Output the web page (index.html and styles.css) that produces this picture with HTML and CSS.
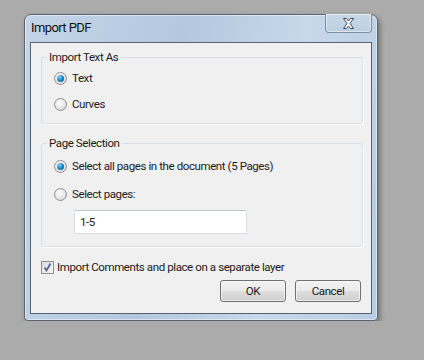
FILE: index.html
```html
<!DOCTYPE html>
<html lang="en">
  <head>
    <meta charset="UTF-8" />
    <title>Import PDF</title>
    <link rel="stylesheet" href="styles.css">
  </head>
  <body>
    <div class="window">
      <div class="titlebar">
        <span class="title">Import PDF</span>
        <button class="close" aria-label="Close">
          <svg width="13" height="11" viewBox="0 0 13 11">
            <path d="M1.5 0.5 H4.5 L6.5 3 L8.5 0.5 H11.5 L8 5.5 L11.5 10.5 H8.5 L6.5 8 L4.5 10.5 H1.5 L5 5.5 Z"
                  fill="#fff" stroke="#3c4658" stroke-width="1" stroke-linejoin="round" />
          </svg>
        </button>
      </div>
      <div class="client">
        <fieldset class="group">
          <legend>Import Text As</legend>
          <label class="row"><span class="radio checked"></span>Text</label>
          <label class="row"><span class="radio"></span>Curves</label>
        </fieldset>

        <fieldset class="group pages">
          <legend>Page Selection</legend>
          <label class="row tall"><span class="radio checked"></span>Select all pages in the document (5 Pages)</label>
          <label class="row"><span class="radio"></span>Select pages:</label>
          <input class="range" type="text" value="1-5" />
        </fieldset>

        <label class="check-row">
          <span class="checkbox">
            <svg width="11" height="11" viewBox="0 0 11 11">
              <path d="M2.5 5.5 L4.5 8.5 L8.5 1.5" fill="none" stroke="#4b5e9a" stroke-width="1.6" />
            </svg>
          </span>
          Import Comments and place on a separate layer
        </label>

        <div class="buttons">
          <button class="btn">OK</button>
          <button class="btn">Cancel</button>
        </div>
      </div>
    </div>
  </body>
</html>
```

FILE: styles.css
```css
body {
  margin: 0;
  padding: 14px 0 0 24px;
  background-color: #ababab;
  font-family: Roboto, "Open Sans", sans-serif;
  font-size: 11.5px;
  letter-spacing: -0.4px;
  color: #1b1b1b;
}
.window {
  width: 354px;
  height: 307px;
  box-sizing: border-box;
  border: 1px solid #5b6470;
  border-radius: 7px 7px 4px 4px;
  background: linear-gradient(100deg, #c3d5e8 0%, #b3c8de 40%, #c6d8ea 70%, #b9cde2 100%);
  box-shadow: 2px 3px 5px rgba(0, 0, 0, 0.35), inset 0 0 0 1px rgba(255, 255, 255, 0.5);
  padding: 0 5px 6px 5px;
}
.titlebar {
  height: 27px;
  display: flex;
  align-items: flex-start;
  justify-content: space-between;
}
.title {
  font-size: 13px;
  letter-spacing: -0.6px;
  padding: 5px 0 0 1px;
  color: #111;
}
.close {
  width: 47px;
  height: 19px;
  margin: -1px 0 0 0;
  padding: 0;
  border: 1px solid #7c8ea4;
  border-top: none;
  border-radius: 0 0 4px 4px;
  background: linear-gradient(#c8d8e8, #bccfe2);
  box-shadow: inset 0 0 0 1px rgba(255, 255, 255, 0.45);
  display: flex;
  align-items: center;
  justify-content: center;
}
.client {
  height: 272px;
  box-sizing: border-box;
  border: 1px solid #59636f;
  background-color: #f0f0f0;
  padding: 6px 8px 0 10px;
}
.group {
  margin: 0;
  padding: 0 0 6px 12px;
  border: 1px solid #d5dfe5;
  border-radius: 3px;
  box-shadow: 1px 1px 0 #fff;
}
.group legend {
  margin-left: -7px;
  padding: 0 2px;
  line-height: 16px;
}
.group.pages {
  margin-top: 11px;
  padding-bottom: 12px;
}
.row {
  height: 26px;
  display: flex;
  align-items: center;
  gap: 5px;
}
.row.tall {
  height: 30px;
}
.radio {
  width: 13px;
  height: 13px;
  box-sizing: border-box;
  border-radius: 50%;
  border: 1px solid #8e8f8f;
  background: radial-gradient(circle at 40% 35%, #fdfdfd 0%, #e6e6e6 55%, #cfcfcf 100%);
  display: flex;
  align-items: center;
  justify-content: center;
}
.radio.checked::after {
  content: "";
  width: 7px;
  height: 7px;
  border-radius: 50%;
  background: radial-gradient(circle at 35% 30%, #8fd4f6 0%, #1b86c8 50%, #0a4c84 100%);
}
.range {
  display: block;
  margin: 3px 0 0 20px;
  width: 173px;
  height: 24px;
  box-sizing: border-box;
  border: 1px solid #d9dee4;
  border-top-color: #bcc3cb;
  border-radius: 2px;
  padding: 0 5px;
  font-family: inherit;
  font-size: 11.5px;
  letter-spacing: inherit;
  color: #1b1b1b;
  background: #fff;
}
.check-row {
  margin-top: 7px;
  height: 26px;
  display: flex;
  align-items: center;
  gap: 3px;
}
.checkbox {
  width: 13px;
  height: 13px;
  box-sizing: border-box;
  border: 1px solid #8f8f8f;
  background: linear-gradient(135deg, #dcdcdc, #f6f6f6);
  display: flex;
  align-items: center;
  justify-content: center;
}
.buttons {
  display: flex;
  justify-content: flex-end;
  gap: 9px;
  margin-right: 2px;
}
.btn {
  width: 66px;
  height: 22px;
  border: 1px solid #707070;
  border-radius: 3px;
  background: linear-gradient(#f2f2f2 0%, #ebebeb 50%, #dddddd 51%, #cfcfcf 100%);
  box-shadow: inset 0 0 0 1px rgba(255, 255, 255, 0.6);
  font-family: inherit;
  font-size: 11.5px;
  letter-spacing: inherit;
  color: #1b1b1b;
  padding: 0;
}
```
